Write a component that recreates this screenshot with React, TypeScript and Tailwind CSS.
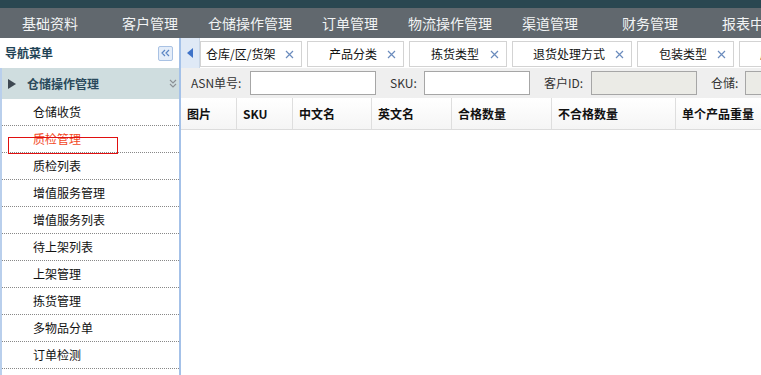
import React from 'react';

const NAV = ['基础资料', '客户管理', '仓储操作管理', '订单管理', '物流操作管理', '渠道管理', '财务管理', '报表中心'];

const MENU = ['仓储收货', '质检管理', '质检列表', '增值服务管理', '增值服务列表', '待上架列表', '上架管理', '拣货管理', '多物品分单', '订单检测'];

const TABS = [
  { label: '仓库/区/货架', w: 'w-[102px]', pl: 'pl-[5px]' },
  { label: '产品分类', w: 'w-[97px]', pl: 'pl-[21px]' },
  { label: '拣货类型', w: 'w-[98px]', pl: 'pl-[21px]' },
  { label: '退货处理方式', w: 'w-[120px]', pl: 'pl-[20px]' },
  { label: '包装类型', w: 'w-[97px]', pl: 'pl-[21px]' },
  { label: '库存类型', w: 'w-[97px]', pl: 'pl-[20px]' },
];

const COLUMNS = [
  { label: '图片', w: 'w-[56px]' },
  { label: 'SKU', w: 'w-[56px]' },
  { label: '中文名', w: 'w-[79px]' },
  { label: '英文名', w: 'w-[80px]' },
  { label: '合格数量', w: 'w-[100px]' },
  { label: '不合格数量', w: 'w-[124px]' },
  { label: '单个产品重量', w: 'w-[100px]' },
];

const CloseX = () => (
  <svg width="9" height="9" viewBox="0 0 9 9" className="shrink-0">
    <path d="M1 1L8 8M8 1L1 8" stroke="#6a8bbd" strokeWidth="1.2" />
  </svg>
);

const App: React.FC = () => {
  return (
    <div className="w-[761px] h-[375px] overflow-hidden bg-white text-[12px] text-[#111] font-['Noto_Sans_CJK_SC','Microsoft_YaHei',sans-serif]">
      {/* top strip */}
      <div className="h-[8px] bg-[#2a4751]" />

      {/* main nav */}
      <nav className="h-[30px] bg-[#61686e] flex whitespace-nowrap overflow-hidden">
        {NAV.map((n) => (
          <div key={n} className="w-[100px] shrink-0 text-center text-[14px] leading-[30px] text-[#f2f4f5]">
            {n}
          </div>
        ))}
      </nav>

      <div className="flex h-[337px]">
        {/* sidebar */}
        <aside className="w-[181px] shrink-0 border-r-2 border-[#a4c1e8] flex flex-col relative">
          <div className="h-[30px] flex items-center justify-between pl-[5px] pr-[6px]">
            <span className="font-bold text-[#1f4356]">导航菜单</span>
            <div className="w-[15px] h-[15px] rounded-[2px] border border-[#a9c2e4] bg-[#e4edf9] flex items-center justify-center">
              <svg width="9" height="8" viewBox="0 0 9 8">
                <path d="M4 1L1 4L4 7M8 1L5 4L8 7" stroke="#5a85c4" strokeWidth="1.2" fill="none" />
              </svg>
            </div>
          </div>
          <div className="flex-1 border-l-2 border-[#b9cfec] flex flex-col overflow-hidden">
            <div className="h-[31px] shrink-0 bg-[#cfdddf] flex items-center pl-[6px] pr-[2px]">
              <svg width="8" height="10" viewBox="0 0 8 10" className="shrink-0">
                <path d="M0 0L8 5L0 10Z" fill="#3e4852" />
              </svg>
              <span className="ml-[11px] font-bold text-[#2a4a5c] flex-1">仓储操作管理</span>
              <svg width="8" height="10" viewBox="0 0 8 10" className="shrink-0">
                <path d="M1 1L4 4L7 1M1 5L4 8L7 5" stroke="#8a8f94" strokeWidth="1.1" fill="none" />
              </svg>
            </div>
            {MENU.map((m, i) => (
              <div
                key={m}
                className={`h-[27px] shrink-0 border-b border-dotted border-[#888] flex items-center pl-[31px] ${
                  i === 1 ? 'text-[#f2491f]' : 'text-[#111]'
                }`}
              >
                {m}
              </div>
            ))}
          </div>
          {/* highlight box */}
          <div className="absolute left-[8px] top-[99px] w-[110px] h-[17px] border border-[#e01010] pointer-events-none" />
        </aside>

        {/* content */}
        <main className="flex-1 min-w-0 flex flex-col overflow-hidden">
          {/* tab bar */}
          <div className="h-[30px] shrink-0 flex whitespace-nowrap">
            <div className="w-[19px] shrink-0 bg-[#dfe9f6] border-r border-[#c9d6e6] flex items-center justify-center">
              <svg width="6" height="10" viewBox="0 0 6 10">
                <path d="M6 0L0 5L6 10Z" fill="#3f73c8" />
              </svg>
            </div>
            <div className="flex gap-[5px] pt-[3px] pb-[1px]">
              {TABS.map((t) => (
                <div
                  key={t.label}
                  className={`${t.w} ${t.pl} shrink-0 h-[26px] border border-[#d3d3d3] bg-white flex items-center justify-between pr-[7px] text-[#111]`}
                >
                  <span>{t.label}</span>
                  <CloseX />
                </div>
              ))}
            </div>
          </div>

          {/* search bar */}
          <div className="h-[30px] shrink-0 bg-[#efefef] flex items-center pl-[10px] whitespace-nowrap text-[#333]">
            <span className="w-[59px] shrink-0">ASN单号:</span>
            <div className="w-[126px] h-[24px] shrink-0 bg-white border border-[#a6a6a6]" />
            <span className="w-[48px] shrink-0 pl-[14px]">SKU:</span>
            <div className="w-[106px] h-[24px] shrink-0 bg-white border border-[#a6a6a6]" />
            <span className="w-[61px] shrink-0 pl-[14px]">客户ID:</span>
            <div className="w-[106px] h-[24px] shrink-0 bg-[#ebebe6] border border-[#a6a6a6]" />
            <span className="w-[48px] shrink-0 pl-[14px]">仓储:</span>
            <div className="w-[106px] h-[24px] shrink-0 bg-[#ebebe6] border border-[#a6a6a6]" />
          </div>

          {/* table header */}
          <div className="h-[32px] shrink-0 flex whitespace-nowrap bg-gradient-to-b from-white to-[#f5f5f5] border-b border-[#dcdcdc]">
            {COLUMNS.map((c) => (
              <div
                key={c.label}
                className={`${c.w} shrink-0 border-r border-[#dedede] flex items-center pl-[6px] font-bold text-[#111]`}
              >
                {c.label}
              </div>
            ))}
          </div>

          <div className="flex-1 bg-white" />
        </main>
      </div>
    </div>
  );
};

export default App;
